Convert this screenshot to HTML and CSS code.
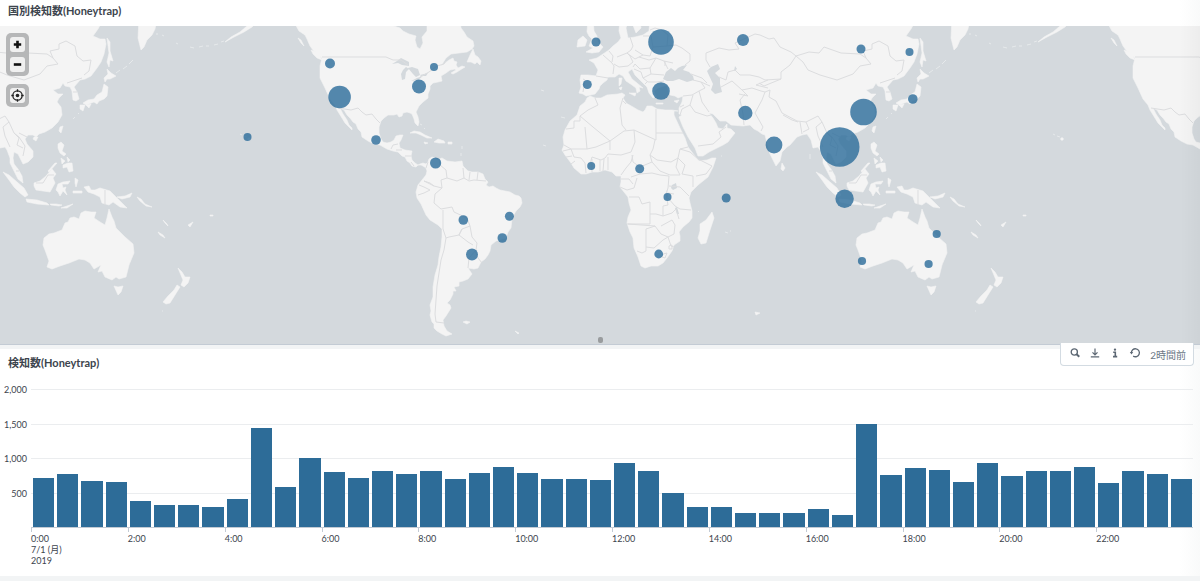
FILE: index.html
```html
<!DOCTYPE html>
<html lang="ja">
<head>
<meta charset="utf-8">
<meta name="viewport" content="width=device-width, initial-scale=1">
<title>Honeytrap</title>
<link rel="stylesheet" href="styles.css">
</head>
<body>
<main class="dashboard">
<section class="panel panel-map">
  <h2 class="panel-title">国別検知数(Honeytrap)</h2>
  <div class="map">
    <svg class="map-canvas" viewBox="0 26 1200 318" role="img" aria-label="国別検知数">
      <defs>
        <g id="world">
          <!-- Americas -->
          <path class="land" d="M294 18L299 28L304 33L307 39L310 46L316 54L322 58L320 66L320 78L325 88L330 99L335 105L337 110L342 118L345 123L349 127L352 130L352 128L349 125L347 120L343 114L340 108L344 110L347 115L350 118L353 122L356 124L358 129L361 132L362 137L368 141L374 144L380 145L387 149L393 151L398 152L402 156L405 157L407 161L410 163L412 166L416 167L418 165L421 165L423 166L426 168L427 171L426 175L422 180L418 185L416 192L417 198L421 204L426 215L430 220L438 225L442 229L442 237L441 247L439 257L438 265L435 275L433 287L433 297L430 305L431 311L430 315L432 322L434 324L434 328L437 331L442 334L446 336L452 334L447 331L444 326L443 320L446 316L451 308L450 305L447 303L450 300L453 294L453 291L456 291L454 287L459 286L459 282L463 281L468 279L472 274L470 271L468 268L474 269L478 268L481 262L485 259L488 255L490 251L491 245L496 241L502 239L506 238L508 232L511 228L512 218L516 211L520 207L522 203L521 198L519 196L515 195L510 192L505 191L500 190L496 188L493 186L489 187L486 185L488 182L485 179L483 174L478 172L472 172L468 171L465 168L463 166L462 161L455 162L447 161L442 158L437 160L435 158L432 157L429 159L428 162L426 164L423 163L420 164L418 165L415 163L412 160L411 156L412 151L405 150L400 148L399 143L401 140L403 135L400 135L396 136L394 140L391 142L387 143L383 142L381 139L379 133L379 127L381 121L384 118L388 115L394 115L397 114L399 117L402 116L403 113L407 112L410 113L412 114L414 119L415 123L418 126L419 122L418 117L416 112L419 106L423 102L428 98L428 94L430 89L430 86L433 83L438 82L442 81L441 76L446 73L450 70L455 69L456 70L451 73L453 74L457 72L460 70L465 67L462 66L458 68L456 65L457 62L454 61L453 58L449 60L445 63L441 66L446 58L451 54L459 53L467 52L472 49L474 46L473 41L470 39L467 37L464 32L461 28L460 18L427 18L427 31L422 37L423 43L420 49L417 47L415 40L416 36L409 34L403 31L400 28L391 25L386 18Z"/>
          <path class="land" d="M467 62L470 55L473 49L475 55L478 57L481 61L480 65L477 62L475 64L471 62ZM311 50L316 52L320 56L322 60L317 58L313 54ZM298 38L301 40L304 46L301 43ZM410 133L414 131L420 132L425 135L432 138L427 138L421 135L416 133ZM434 142L438 139L444 141L445 143L439 143ZM424 142L428 143L425 144ZM448 142h4v2h-4ZM463 322L466 321L470 322L467 324ZM515 331L519 333L518 334Z"/>
          <path class="water" d="M392 64L397 61L401 58L405 60L409 62L409 66L402 65L398 63ZM402 80L401 74L403 70L406 67L409 69L406 72L405 79ZM408 68L412 67L418 69L420 75L416 77L413 74ZM411 81L417 78L423 76L418 80ZM420 75L428 73L426 76L421 76ZM419 29L422 30L420 32Z"/>
          <!-- Africa -->
          <path class="land" d="M678 111L672 110L665 110L657 109L652 106L647 106L645 110L643 112L638 110L633 107L626 103L623 98L625 95L622 93L618 94L607 95L601 98L595 98L590 96L587 98L585 102L580 106L577 115L570 121L565 130L563 137L564 145L562 150L565 155L571 163L574 168L581 174L586 174L592 172L598 172L605 170L612 172L616 176L621 176L621 182L620 187L624 192L628 197L629 203L631 210L628 217L627 223L630 232L633 238L634 248L638 257L641 266L645 268L651 266L658 266L663 263L667 258L672 251L674 245L680 241L680 236L679 232L683 227L689 222L692 218L692 211L690 203L689 198L691 192L698 185L708 177L713 167L716 158L712 158L707 160L699 161L695 156L691 151L688 147L685 138L680 128L674 115L674 111Z"/>
          <path class="land" d="M712 212L714 218L710 230L706 243L701 244L698 238L700 231L700 224L706 220Z"/>
          <path class="water" d="M672 185L676 183L677 188L673 190L671 188ZM677 207L679 214L677 214L675 208ZM667 190L668 198L666 196Z"/>
          <!-- Europe and Asia -->
          <path class="land" d="M620 18L619 31L621 38L618 42L613 46L609 50L603 54L597 58L589 60L594 63L598 70L596 76L588 75L581 75L580 80L581 87L579 93L583 94L586 96L595 94L599 89L600 86L603 83L607 80L608 77L615 77L619 74L623 76L626 81L632 85L636 88L637 93L640 91L639 87L643 88L637 83L632 79L628 72L632 69L635 75L642 82L647 87L649 93L653 98L656 97L654 91L658 88L661 87L667 85L668 90L670 95L675 96L678 98L683 96L682 102L679 108L679 114L682 115L679 117L683 127L688 137L695 148L698 156L703 156L709 152L717 148L723 145L728 142L731 138L735 133L731 129L727 128L727 124L723 129L718 128L716 123L713 118L709 113L713 114L720 121L726 121L731 125L743 126L750 125L754 129L758 131L762 134L765 135L767 143L770 154L776 166L780 161L782 152L787 147L790 145L797 137L802 135L807 134L811 140L813 148L818 147L820 150L823 158L823 163L827 171L831 179L836 183L835 176L831 169L827 164L826 158L827 152L831 154L834 160L836 164L841 162L846 157L846 151L840 144L838 139L841 135L846 135L849 137L852 134L858 132L865 128L871 122L875 115L874 107L870 102L872 98L876 94L871 94L866 90L873 88L876 83L878 86L883 87L885 91L886 100L889 101L892 99L890 92L887 87L893 80L898 79L904 76L910 68L914 62L917 54L919 44L918 39L913 39L906 36L911 29L917 18L650 18L649 31L643 35L635 37L628 38L626 28L629 18Z"/>
          <path class="land" d="M588 18L587 32L589 36L592 39L589 46L593 48L586 52L592 53L599 52L603 47L598 42L597 36L594 31L593 18ZM577 47L578 40L583 36L587 40L585 46ZM631 20L636 33L641 28L640 20ZM619 78L622 78L621 84L619 86ZM629 93L636 93L635 96ZM619 88L622 87L621 90ZM656 103h7v1h-7ZM674 101L679 100L677 103Z"/>
          <path class="water" d="M663 79L666 72L671 68L675 71L678 68L682 66L687 65L683 70L689 72L693 76L694 80L687 82L679 79L673 81L667 81ZM707 71L711 67L718 64L720 69L715 73L720 78L720 84L722 92L715 94L711 90L713 84ZM735 66L737 69L734 71Z"/>
          <path class="land" d="M782 163L785 168L783 171L781 169ZM873 127L876 126L874 133L872 131ZM847 137L851 137L849 141L846 139ZM920 69L924 73L929 76L923 79L920 79L918 82L917 78L921 74ZM917 84L921 87L920 96L917 99L912 101L910 104L907 102L899 105L896 103L901 100L907 99L910 95L915 92ZM893 105L898 105L896 111L893 109ZM899 105L904 104L902 108ZM920 38L923 42L923 51L926 61L923 60L922 67L920 62L922 53ZM952 18L951 38L954 50L957 47L960 40L965 35L968 29L970 18Z"/>
          <path class="land" d="M871 144L874 142L877 145L875 151L879 154L877 156L873 153L871 148ZM876 165L881 163L885 163L886 171L882 172L880 167L876 168ZM880 157L883 160L881 162ZM874 158L878 161L875 164ZM862 172L870 163L868 163L861 171ZM816 172L822 175L830 182L837 188L841 195L838 197L833 193L827 187L822 180ZM847 183L853 181L859 176L865 169L869 174L866 178L868 183L863 192L856 191L849 190L847 186ZM839 199L850 200L860 203L862 205L850 204L840 202ZM871 184L876 182L883 181L881 184L875 184L876 188L879 187L878 190L880 195L876 191L873 196L871 192L869 190ZM863 204L869 204L875 205L872 206L864 205ZM874 208L886 204L880 208ZM888 178L891 180L889 187L888 183ZM886 191h9v2h-9ZM897 187L902 186L904 190L908 190L913 188L923 191L929 197L934 202L940 208L933 207L926 202L922 205L915 203L913 197L907 194L901 192ZM930 197L938 196L945 193L943 197L935 199ZM950 197L954 199L958 204L965 207L959 206L953 201ZM976 220L980 224L981 226L978 223ZM971 232L976 235L978 238L973 235ZM1001 225L1006 222L1003 227ZM1023 215h3v1h-3Z"/>
          <!-- Australia and New Zealand -->
          <path class="land" d="M857 238L862 234L867 233L875 230L878 223L881 222L883 218L887 217L892 219L894 213L898 211L904 212L909 212L907 218L913 222L918 225L920 218L922 209L925 217L927 221L929 228L938 237L946 244L947 253L942 265L939 277L932 279L929 277L925 280L918 277L915 271L911 272L914 265L907 269L903 263L898 260L892 259L882 263L873 266L865 269L860 267L862 261L858 250L856 245ZM927 286L931 287L936 286L934 292L931 295ZM991 268L995 272L998 277L1003 277L1001 283L997 287L994 285L996 280ZM990 285L993 287L988 295L983 303L979 304L976 302L981 296L987 290ZM755 312L760 313L756 315Z"/>
          <circle class="land" cx="1062" cy="139" r="1.3"/>
          <path class="islands" d="M969 34l2 0M975 35l2 1M989 43l2 1M1003 47l4 1M1012 47l4 -1M1019 46l3 0M1027 45l4 -1M1034 42l3 -1M1053 134l2 1M1057 136l3 1M929 73l4 -3M936 69l4 -3M942 64l4 -4M886 119l2 -2M891 114l1 -1M420 124l2 1M424 128l1 1M462 146l0 3M461 153l0 3M541 90l3 1M561 117l4 1M543 145l3 1M725 232l3 1M730 231l1 0M698 211l1 1M810 154l0 5M721 156l1 0M975 311l1 0"/>
          <path class="land" d="M1038 42L1044 37L1053 32L1060 26L1066 20L1072 20L1065 27L1057 32L1047 37ZM1106 20L1113 26L1120 32L1118 35L1112 31Z"/>
          <!-- borders -->
          <path class="border" d="M322 57H386L393 60L401 60L408 65M420 77L429 72L437 66L444 64L446 61M338 108L351 110L358 108L362 112L366 115L372 114L376 119L380 123M391 149L393 145L398 144M396 150L402 150M405 156L411 156M411 162L414 166M439 159L440 165L446 170L447 178L441 180L442 188L434 186L424 181M419 185L424 187L430 190L424 193L418 195M424 181L430 183L434 186M442 188L435 194L434 203L441 209L452 207L454 212L467 218L470 226L462 229L459 235L449 237L446 238L443 229L443 210M447 178L457 181L464 178L463 168M464 178L469 181L474 180L486 181M470 172L469 180M478 172L477 180M470 226L472 237L477 243L476 250L469 258L468 268M462 229L459 235L468 242L473 245M475 250L478 258L482 263M446 238L444 250L441 260L439 273L437 286L436 300L435 314L436 322L444 323M426 168L428 162"/>
          <path class="border" d="M595 98L598 105L588 110L580 116L580 121L574 121V128L566 129M580 116L593 127L610 141L624 131L634 130L656 140V109M656 133H683M623 98L620 108L622 125L626 130M623 101L626 104M585 127L587 149L571 149L564 145M587 149L596 147L610 141V150M634 130L635 142L631 152L621 155L608 154L605 158L601 160L592 157L590 164M655 140L653 149L650 155L652 162L640 167L633 162L632 155M563 151L571 149L574 157L581 158L585 163L586 173M566 157L572 156M571 164L575 161M592 172L592 159M600 171V160M603 171L604 159M608 170V157M621 175L626 168L631 162L633 155M650 155L657 160L671 162L678 158L685 165M652 162L660 171L670 175L680 175L676 167L678 158L680 149L688 147M685 165L682 174L693 176L693 187M680 149L690 152L698 159L712 166L706 174L696 176M631 177L640 174L652 173L660 175L669 176L668 188L666 194L668 205L663 206V216L656 214H650V202L642 204L639 197L629 197M621 179H629L633 184M620 187L627 190L634 188L637 178M669 186L680 187L689 196M668 198L675 206L680 209L691 210M650 214V224L627 224M628 224L655 226L646 229V251L642 253L637 251M655 226L661 234L668 237L663 240L654 248L646 247M661 226L672 220L675 225L674 234L668 237L671 246L674 247M663 216L672 213L676 209L679 219M663 254L667 253L665 258L662 257ZM669 246L672 245L672 249L669 249ZM668 193L674 194"/>
          <path class="border" d="M583 79L585 80L583 92M596 76L608 78M603 55L612 63L614 66L613 74M609 51L613 56L612 62M614 64L619 67L628 66L633 62L630 56L627 53L617 57M630 37L633 46L631 50L627 53L635 59L639 57L643 55L635 50M643 36H651L653 47L650 56L643 55M639 57L649 60L656 58L650 68L640 69L635 64L633 67M656 58L664 61L668 69M650 68L651 74L664 75M634 69L641 72L643 78L648 82L657 82L664 81M643 78L647 76L651 74M645 84L647 82M653 47L667 46L676 45L682 48L690 54L690 61L685 65M650 30L655 28L662 30L668 35L667 46M665 61L665 66M664 61L673 63M691 74L702 78L707 83M693 80L701 82L710 86M701 82L705 88L699 91L692 95L683 96M693 95L690 105L682 109L680 115M690 105L695 112L707 116L711 115M699 91L702 102L709 112M680 107L684 105M698 146L713 144L721 137L719 132L726 127M710 67L706 60L706 53L719 48L729 50L739 49L735 43L755 34L760 35L769 39L774 38L780 47L791 52L796 56L790 65L781 72V79L765 80L759 77L750 75H740L735 70L728 72L726 80L719 77M721 87L732 81L742 90L748 96L739 94M745 94L740 100L743 114L744 125M742 90L752 88L761 91L765 92L770 90L769 97L776 101L782 113L797 121L806 122L818 116L822 122M765 92L762 100L755 113L763 127L761 131M781 79L764 86L759 83M768 80L756 85L768 88M783 115L792 120L798 122M800 122L802 134M806 122L809 129L803 132M796 56L809 52L819 53L824 47L841 53L860 54L866 58L871 64L860 66L853 74L837 80L820 75L808 70L803 62L796 56M866 58L863 51L872 49L872 44L879 41L888 46L890 56L896 61L904 60L902 71L897 75M880 83L895 78M886 92H890M822 122L816 127L818 136L823 147M822 122L827 133L832 137L838 146L836 156M827 133L832 138L830 145L836 148M832 133L840 137M829 171H832M849 183L856 183L861 175L867 175M918 190V205"/>
        </g>
        <linearGradient id="edge"><stop offset="0" stop-color="#000" stop-opacity="0"/><stop offset="1" stop-color="#000" stop-opacity=".03"/></linearGradient>
      </defs>
      <use href="#world" x="-813"/>
      <use href="#world"/>
      <use href="#world" x="813"/>
      <g class="bubbles">
        <circle cx="596" cy="42" r="4.5"/><circle cx="661" cy="42" r="12.8"/><circle cx="743" cy="40" r="6"/>
        <circle cx="861" cy="49" r="4.5"/><circle cx="909.5" cy="52" r="4"/><circle cx="330" cy="63.5" r="5"/>
        <circle cx="434" cy="67" r="4"/><circle cx="419" cy="86.5" r="7"/><circle cx="587.3" cy="84.5" r="4.5"/>
        <circle cx="661" cy="91" r="8.8"/><circle cx="339.6" cy="97" r="11.3"/><circle cx="912.8" cy="99" r="4.8"/>
        <circle cx="745.3" cy="113" r="7.2"/><circle cx="863.5" cy="112" r="13.3"/><circle cx="247.5" cy="137" r="4"/>
        <circle cx="376" cy="140" r="4.8"/><circle cx="774" cy="145" r="8.4"/><circle cx="839.7" cy="147" r="19.8"/>
        <circle cx="435.6" cy="163" r="5.6"/><circle cx="591.2" cy="166" r="4"/><circle cx="639.7" cy="168.7" r="4.5"/>
        <circle cx="667.5" cy="197" r="4"/><circle cx="726.2" cy="198" r="4.5"/><circle cx="844.6" cy="198.7" r="9.2"/>
        <circle cx="463.3" cy="220" r="4.8"/><circle cx="509.4" cy="216.3" r="4.5"/><circle cx="502.3" cy="238" r="4.8"/>
        <circle cx="472" cy="254.5" r="6"/><circle cx="936.7" cy="234" r="4.1"/><circle cx="658.7" cy="254" r="4.4"/>
        <circle cx="862" cy="261" r="4.1"/><circle cx="928.6" cy="264" r="4.1"/>
      </g>
      <rect x="1180" y="26" width="20" height="318" fill="url(#edge)"/>
    </svg>
    <div class="map-controls">
      <div class="control-group">
        <button class="map-button" type="button" aria-label="拡大"><svg viewBox="0 0 15 15"><path d="M7.5 3.8v7.4M3.8 7.5h7.4" stroke="#111" stroke-width="2.6"/></svg></button>
        <button class="map-button" type="button" aria-label="縮小"><svg viewBox="0 0 15 15"><path d="M3.8 7.5h7.4" stroke="#111" stroke-width="2.6"/></svg></button>
      </div>
      <div class="control-group">
        <button class="map-button" type="button" aria-label="位置をリセット"><svg viewBox="0 0 15 15" fill="none" stroke="#222"><circle cx="7.5" cy="7.5" r="4.7" stroke-width="1.2"/><circle cx="7.5" cy="7.5" r="1.8" fill="#222" stroke="none"/><path d="M7.5 1.3v2.5M7.5 11.2v2.5M1.3 7.5h2.5M11.2 7.5h2.5" stroke-width="1.3"/></svg></button>
      </div>
    </div>
    <span class="drag-handle"></span>
  </div>
</section>
<section class="panel panel-chart">
  <h2 class="panel-title">検知数(Honeytrap)</h2>
  <div class="toolbar">
    <button type="button" aria-label="検索"><svg viewBox="0 0 10 10"><circle cx="4.3" cy="4" r="3.1" stroke-width="1.3"/><path d="M6.6 6.2L9.3 8.8" stroke-width="1.9"/></svg></button>
    <button type="button" aria-label="エクスポート"><svg viewBox="0 0 10 10"><path d="M5 .6V6.8M2.5 4.4L5 6.9L7.5 4.4M.8 8.8H9.2" stroke-width="1.2"/></svg></button>
    <button type="button" aria-label="情報"><svg viewBox="0 0 10 10"><path d="M3.2 4.2H5.3V8.6M3 8.6H7.2" stroke-width="1.6"/><circle cx="5" cy="1.6" r=".6" stroke-width="1.2"/></svg></button>
    <button type="button" aria-label="更新"><svg viewBox="0 0 10 10"><path d="M1.4 5A4 4 0 1 1 3.2 8.1" stroke-width="1.3"/><path d="M-.2 4H3.2L1.5 6.6Z" fill="#5c6773" stroke="none"/></svg></button>
    <span class="updated">2時間前</span>
  </div>
  <div class="chart">
    <div class="y-axis"><span>2,000</span><span>1,500</span><span>1,000</span><span>500</span></div>
    <div class="plot">
      <div class="gridlines"><i></i><i></i><i></i><i></i></div>
      <div class="bars">
        <i style="--v:717"></i><i style="--v:775"></i><i style="--v:674"></i><i style="--v:648"></i><i style="--v:384"></i><i style="--v:326"></i><i style="--v:312"></i><i style="--v:283"></i>
        <i style="--v:406"></i><i style="--v:1442"></i><i style="--v:587"></i><i style="--v:1007"></i><i style="--v:797"></i><i style="--v:717"></i><i style="--v:812"></i><i style="--v:775"></i>
        <i style="--v:812"></i><i style="--v:696"></i><i style="--v:790"></i><i style="--v:870"></i><i style="--v:790"></i><i style="--v:696"></i><i style="--v:696"></i><i style="--v:681"></i>
        <i style="--v:928"></i><i style="--v:812"></i><i style="--v:500"></i><i style="--v:290"></i><i style="--v:283"></i><i style="--v:196"></i><i style="--v:210"></i><i style="--v:210"></i>
        <i style="--v:268"></i><i style="--v:167"></i><i style="--v:1490"></i><i style="--v:754"></i><i style="--v:855"></i><i style="--v:833"></i><i style="--v:659"></i><i style="--v:928"></i>
        <i style="--v:739"></i><i style="--v:812"></i><i style="--v:819"></i><i style="--v:870"></i><i style="--v:638"></i><i style="--v:819"></i><i style="--v:775"></i><i style="--v:703"></i>
      </div>
    </div>
    <div class="x-axis">
      <span>0:00<br>7/1 (月)<br>2019</span><span>2:00</span><span>4:00</span><span>6:00</span><span>8:00</span><span>10:00</span><span>12:00</span><span>14:00</span><span>16:00</span><span>18:00</span><span>20:00</span><span>22:00</span>
    </div>
  </div>
</section>
</main>
</body>
</html>
```

FILE: styles.css
```css
* {
  box-sizing: border-box;
}

body {
  margin: 0;
  background: #f2f4f5;
  color: #3c444d;
  font-family: Lato, "Noto Sans CJK JP", sans-serif;
  font-size: 9px;
}

.dashboard {
  display: flex;
  flex-direction: column;
  gap: 4px;
}

.panel {
  position: relative;
  background: linear-gradient(to left, #f9fafa, #fff 20px);
}

.panel-title {
  margin: 0;
  padding: 0 8px;
  font-size: 11px;
  line-height: 22px;
  font-weight: 700;
}

.panel-map .panel-title {
  padding-bottom: 4px;
}

.map {
  position: relative;
  border-bottom: 1px solid #c3cbd4;
  background: #d4d9dd;
}

.map-canvas {
  display: block;
  width: 100%;
  height: auto;
}

.land {
  fill: #f4f4f4;
  stroke: #f4f4f4;
  stroke-width: 0.6;
  stroke-linejoin: round;
}

.water {
  fill: #d4d9dd;
}

.border {
  fill: none;
  stroke: #dcdddf;
  stroke-width: 1;
  stroke-linejoin: round;
}

.islands {
  fill: none;
  stroke: #e6e9eb;
  stroke-width: 1;
}

.bubbles {
  fill: #2b6c9a;
  fill-opacity: 0.8;
}

.map-controls {
  position: absolute;
  top: 7px;
  left: 6px;
  display: grid;
  gap: 8px;
}

.control-group {
  display: grid;
  gap: 5px;
  padding: 4px;
  border-radius: 5px;
  background: #b6b7b8;
}

.map-button {
  width: 15px;
  height: 15px;
  padding: 0;
  border: 0;
  border-radius: 3px;
  background: #f0f0f0;
}

.map-button svg {
  display: block;
  width: 100%;
}

.drag-handle {
  position: absolute;
  bottom: 1px;
  left: 50%;
  width: 5px;
  height: 6px;
  margin-left: -2px;
  border-radius: 2px;
  background: #999c9e;
}

.panel-chart {
  padding: 3px 0 10px;
}

.toolbar {
  position: absolute;
  top: -6px;
  right: 6px;
  display: flex;
  gap: 10px;
  height: 23px;
  padding: 0 7px 0 9px;
  border: 1px solid #d3dbe2;
  border-top: 0;
  border-radius: 0 0 4px 4px;
  background: #fff;
}

.toolbar button {
  width: 10px;
  height: 19px;
  padding: 0;
  border: 0;
  background: none;
}

.toolbar svg {
  display: block;
  width: 10px;
  overflow: visible;
  fill: none;
  stroke: #5c6773;
}

.updated {
  color: #6b7785;
  font-size: 10px;
  line-height: 24px;
  white-space: nowrap;
}

.chart {
  display: grid;
  grid-template-columns: 27px 1fr;
  grid-template-rows: 139px auto;
  column-gap: 4px;
  padding: 15px 7px 0 0;
}

.y-axis {
  display: grid;
  grid-template-rows: repeat(4, 1fr);
  align-items: center;
  margin: -17px 0 17px;
  text-align: right;
}

.plot {
  display: grid;
  border-bottom: 1px solid #c3cbd4;
}

.gridlines,
.bars {
  grid-area: 1 / 1;
}

.gridlines {
  display: grid;
  grid-template-rows: repeat(4, 1fr);
}

.gridlines i {
  border-top: 1px solid #ebedef;
}

.bars {
  display: grid;
  grid-template-columns: repeat(48, 1fr);
  align-items: end;
}

.bars i {
  height: calc(var(--v) / 20 * 1%);
  margin: 0 1px 0 2px;
  background: #2d6c98;
}

.x-axis {
  grid-column: 2;
  display: grid;
  grid-template-columns: repeat(12, 1fr);
  line-height: 11px;
}

.x-axis span {
  padding-top: 5px;
  background: linear-gradient(#c3cbd4, #c3cbd4) 0 0 / 1px 4px no-repeat;
}
```
